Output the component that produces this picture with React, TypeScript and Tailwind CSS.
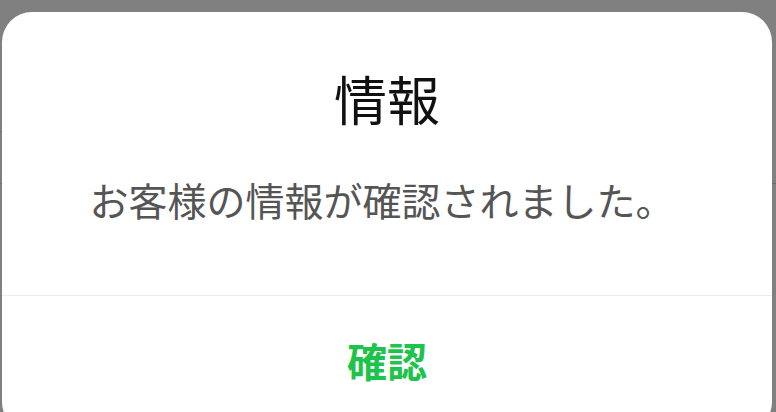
import React from "react";

const jp = { fontFamily: '"Noto Sans CJK JP", "Noto Sans", sans-serif' };

export default function App() {
  return (
    <div className="relative h-[412px] w-[776px] overflow-hidden bg-[#808080]" style={jp}>
      {/* page behind the dialog */}
      <div className="flex flex-col pt-[131px]">
        <div className="h-[52px] w-[300px] border-t border-[#6f6f6f]" />
        <div className="h-[52px] border-t border-[#6f6f6f]" />
      </div>

      {/* dialog */}
      <div className="absolute left-[2px] top-[12px] flex h-[420px] w-[770px] flex-col rounded-[30px] bg-white">
        <h1 className="pt-[60px] text-center text-[53px] leading-none font-normal text-[#111111]">
          情報
        </h1>
        <p className="pt-[55px] pr-[10px] text-center text-[39px] leading-none text-[#555555]">
          お客様の情報が確認されました。
        </p>
        <div className="mt-[76px] border-t border-[#ececec]" />
        <button className="pt-[44px] text-center text-[40px] leading-none font-bold text-[#1ec34b]">
          確認
        </button>
      </div>
    </div>
  );
}
